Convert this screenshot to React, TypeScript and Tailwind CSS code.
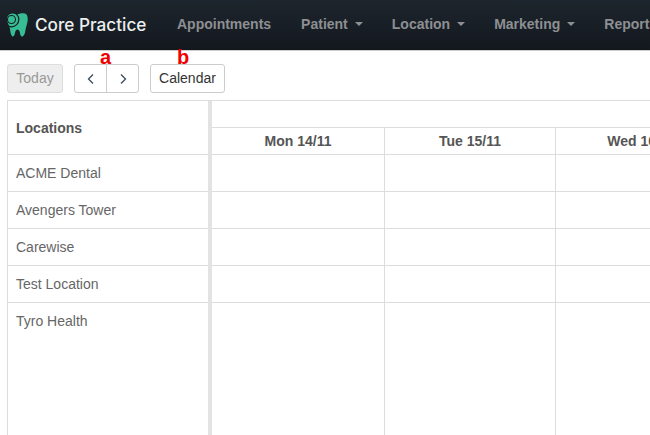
import React from 'react';

const navItems = [
  { label: 'Appointments', caret: false },
  { label: 'Patient', caret: true },
  { label: 'Location', caret: true },
  { label: 'Marketing', caret: true },
  { label: 'Reports', caret: false },
];

const locations = ['ACME Dental', 'Avengers Tower', 'Carewise', 'Test Location', 'Tyro Health'];
const days = ['Mon 14/11', 'Tue 15/11', 'Wed 16/11'];

// tooth with a ripple coming off the top left corner
const Logo = () => (
  <svg width="21" height="24" viewBox="0 0 21 24" className="shrink-0">
    <path
      d="M3 1C5 0 8 .5 10.500 1.500C13 .5 16 -.300 18.500 .800C20.800 2 21 5.500 20.500 8.500C20 11.500 19 14 18.500 17C18 20 17.500 22.500 15.500 23.500C13.500 24 13.200 21 12.800 19C12.400 17.500 11.500 16.500 10.500 16.500C9.500 16.500 8.600 17.500 8.200 19C7.800 21 7.200 24 5.500 23.500C3.800 22.500 3.400 19 3 16C2.400 12.500 .2 10 0 6C0 4 1 2 3 1Z"
      fill="#37bd93"
    />
    <circle cx="4.500" cy="6.500" r="4" fill="none" stroke="#181e25" strokeWidth="1.100" />
    <circle cx="4.500" cy="6.500" r="7.300" fill="none" stroke="#181e25" strokeWidth="1.200" />
    <circle cx="4.500" cy="6.500" r="2.400" fill="#37bd93" />
  </svg>
);

const Chevron = ({ d }: { d: string }) => (
  <svg width="8" height="12" viewBox="0 0 8 12" fill="none" stroke="#3b4a5c" strokeWidth="1.300">
    <path d={d} />
  </svg>
);

const App: React.FC = () => {
  return (
    <div className="relative h-[435px] w-[650px] overflow-hidden bg-white font-['Liberation_Sans',Arial,sans-serif] text-[14px] text-[#666]">
      {/* Navbar */}
      <nav className="flex h-[51px] items-center overflow-hidden border-b border-[#ccc] bg-gradient-to-b from-[#1d252e] to-[#13181d] pl-[7px]">
        <Logo />
        <span className="ml-[7px] w-[112px] shrink-0 whitespace-nowrap font-['Inter',sans-serif] text-[17.200px] font-medium text-[#eceeee]">
          Core Practice
        </span>
        <div className="ml-[30px] flex -translate-y-px gap-[30px] whitespace-nowrap text-[14px] font-bold text-[#8d8f92]">
          {navItems.map((item) => (
            <span key={item.label} className="flex items-center">
              {item.label}
              {item.caret && (
                <span className="ml-[7px] mr-[-1px] h-0 w-0 border-x-[4px] border-t-[4px] border-x-transparent border-t-[#8d8f92]" />
              )}
            </span>
          ))}
        </div>
      </nav>

      {/* Red annotation labels */}
      <span className="absolute left-[100px] top-[42px] text-[20px] font-bold text-[#f00000]">a</span>
      <span className="absolute left-[177px] top-[42px] text-[20px] font-bold text-[#f00000]">b</span>

      {/* Toolbar */}
      <div className="ml-[7px] mt-[13px] flex h-[29px]">
        <button className="h-full w-[56px] rounded-[3px] border border-[#ddd] bg-[#eee] text-[#999]">Today</button>
        <div className="ml-[11px] flex h-full w-[65px] rounded-[3px] border border-[#ccc]">
          <button className="flex flex-1 items-center justify-center border-r border-[#ccc]">
            <Chevron d="M6 1.500L1.500 6L6 10.500" />
          </button>
          <button className="flex w-[31px] items-center justify-center">
            <Chevron d="M2 1.500L6.500 6L2 10.500" />
          </button>
        </div>
        <button className="ml-[11px] h-full w-[75px] rounded-[3px] border border-[#ccc] text-[#333]">Calendar</button>
      </div>

      {/* Grid */}
      <div className="ml-[7px] mt-[7px] flex h-[335px] border-l border-t border-[#ddd]">
        <div className="w-[200px] shrink-0">
          <div className="flex h-[54px] items-center border-b border-[#ddd] pl-[8px] pt-px font-bold text-[#555]">Locations</div>
          {locations.map((name, i) => (
            <div
              key={name}
              className={`flex h-[37px] items-center pl-[8px] ${i < locations.length - 1 ? 'border-b border-[#ddd]' : ''}`}
            >
              {name}
            </div>
          ))}
        </div>
        <div className="w-[4px] shrink-0 bg-[#e3e3e3]" />
        <div className="min-w-0 flex-1 overflow-hidden">
          <div className="h-[27px] border-b border-[#ddd]" />
          <div className="grid w-[515px] grid-cols-[173px_171px_171px]">
            {days.map((day) => (
              <div key={day} className="border-r border-[#ddd]">
                <div className="flex h-[27px] items-center justify-center whitespace-nowrap border-b border-[#ddd] font-bold text-[#555]">
                  {day}
                </div>
                {locations.map((name, i) => (
                  <div key={name} className={i < locations.length - 1 ? 'h-[37px] border-b border-[#ddd]' : 'h-[200px]'} />
                ))}
              </div>
            ))}
          </div>
        </div>
      </div>
    </div>
  );
};

export default App;
